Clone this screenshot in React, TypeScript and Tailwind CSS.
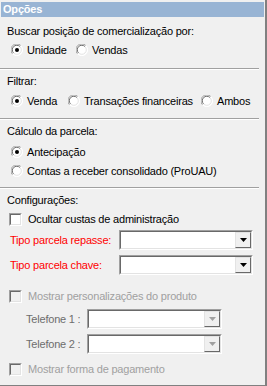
import React from 'react'

const font = { fontFamily: '"Liberation Sans", Arial, sans-serif', letterSpacing: '-0.2px' }

function Radio({ checked, disabled }: { checked?: boolean; disabled?: boolean }) {
    return (
        <svg width="12" height="12" viewBox="0 0 12 12" className="shrink-0">
            <circle cx="6" cy="6" r="5.5" fill={disabled ? '#f0f0f0' : '#ffffff'} />
            <path d="M1.6 9.9 A5.5 5.5 0 0 1 9.9 1.6" fill="none" stroke="#a0a0a0" strokeWidth="1" />
            <path d="M2.6 9 A4.3 4.3 0 0 1 9 2.6" fill="none" stroke="#696969" strokeWidth="1" />
            <path d="M9.9 1.6 A5.5 5.5 0 0 1 1.6 9.9" fill="none" stroke="#ffffff" strokeWidth="1" />
            <path d="M9 2.6 A4.3 4.3 0 0 1 2.6 9" fill="none" stroke="#e3e3e3" strokeWidth="1" />
            {checked && <circle cx="6" cy="6" r="2" fill="#000000" />}
        </svg>
    )
}

// radio + label, fixed width so the next radio lands where it should
function Opt({ label, checked, width }: { label: string; checked?: boolean; width?: number }) {
    return (
        <span className="flex items-center shrink-0" style={width ? { width } : undefined}>
            <Radio checked={checked} />
            <span className="ml-[4px]">{label}</span>
        </span>
    )
}

function Check({ disabled }: { disabled?: boolean }) {
    return (
        <span className="block w-[13px] h-[13px] shrink-0 border-t border-l border-[#a0a0a0] border-r-white border-b-white border-r border-b">
            <span className={`block w-full h-full border-t border-l border-[#696969] border-r border-b border-r-[#e3e3e3] border-b-[#e3e3e3] ${disabled ? 'bg-[#f0f0f0]' : 'bg-white'}`} />
        </span>
    )
}

function Combo({ width, disabled }: { width: number; disabled?: boolean }) {
    return (
        <span
            className="flex h-[20px] shrink-0 border-t border-l border-[#a0a0a0] border-r border-b border-r-white border-b-white"
            style={{ width }}
        >
            <span className="flex flex-1 border-t border-l border-[#696969] border-r border-b border-r-[#e3e3e3] border-b-[#e3e3e3] bg-white">
                <span className="flex-1" />
                <span className="w-[16px] h-full flex items-center justify-center bg-[#f0f0f0] border-t border-l border-[#e3e3e3] border-r border-b border-r-[#696969] border-b-[#696969]">
                    <svg width="7" height="4" viewBox="0 0 7 4">
                        <path d="M0 0 H7 L3.5 4 Z" fill={disabled ? '#a0a0a0' : '#000000'} />
                    </svg>
                </span>
            </span>
        </span>
    )
}

function Sep() {
    return (
        <div className="w-[259px]">
            <div className="h-px bg-[#a0a0a0]" />
            <div className="h-px bg-white" />
        </div>
    )
}

export default function App() {
    return (
        <div className="w-[267px] h-[386px] bg-[#f0f0f0] text-[11px] text-black border-r-2 border-b border-[#808080] overflow-hidden" style={font}>
            <div className="pt-[2px] pl-[1px] pr-[1px]">
                <div className="h-[15px] bg-[#98b4d4] text-white font-bold pl-[2px] flex items-center leading-none">Opções</div>
            </div>

            <div className="pl-[7px] mt-[6px] h-[16px] flex items-center">Buscar posição de comercialização por:</div>
            <div className="mt-[3px] h-[16px] flex items-center pl-[11px]">
                <Opt label="Unidade" checked width={65} />
                <Opt label="Vendas" />
            </div>

            <div className="mt-[10px]"><Sep /></div>

            <div className="pl-[7px] mt-[3px] h-[16px] flex items-center">Filtrar:</div>
            <div className="mt-[4px] h-[16px] flex items-center pl-[11px]">
                <Opt label="Venda" checked width={57} />
                <Opt label="Transações financeiras" width={133} />
                <Opt label="Ambos" />
            </div>

            <div className="mt-[9px]"><Sep /></div>

            <div className="pl-[7px] mt-[3px] h-[16px] flex items-center">Cálculo da parcela:</div>
            <div className="mt-[5px] h-[16px] flex items-center pl-[11px]">
                <Opt label="Antecipação" checked />
            </div>
            <div className="mt-[3px] h-[16px] flex items-center pl-[11px]">
                <Opt label="Contas a receber consolidado (ProUAU)" />
            </div>

            <div className="mt-[8px]"><Sep /></div>

            <div className="pl-[7px] mt-[3px] h-[16px] flex items-center">Configurações:</div>
            <div className="mt-[3px] h-[16px] flex items-center pl-[9px]">
                <Check />
                <span className="ml-[6px]">Ocultar custas de administração</span>
            </div>
            <div className="mt-[3px] h-[20px] flex items-center pl-[10px] text-[#ff0000]">
                <span className="w-[109px]">Tipo parcela repasse:</span>
                <Combo width={134} />
            </div>
            <div className="mt-[5px] h-[20px] flex items-center pl-[10px] text-[#ff0000]">
                <span className="w-[109px]">Tipo parcela chave:</span>
                <Combo width={134} />
            </div>

            <div className="mt-[13px] h-[16px] flex items-center pl-[9px] text-[#a0a0a0]">
                <Check disabled />
                <span className="ml-[6px]">Mostrar personalizações do produto</span>
            </div>
            <div className="mt-[5px] h-[20px] flex items-center pl-[26px] text-[#6d6d6d]">
                <span className="w-[61px]">Telefone 1 :</span>
                <Combo width={135} disabled />
            </div>
            <div className="mt-[5px] h-[20px] flex items-center pl-[26px] text-[#6d6d6d]">
                <span className="w-[61px]">Telefone 2 :</span>
                <Combo width={135} disabled />
            </div>

            <div className="mt-[7px] h-[16px] flex items-center pl-[9px] text-[#a0a0a0]">
                <Check disabled />
                <span className="ml-[6px]">Mostrar forma de pagamento</span>
            </div>
        </div>
    )
}
